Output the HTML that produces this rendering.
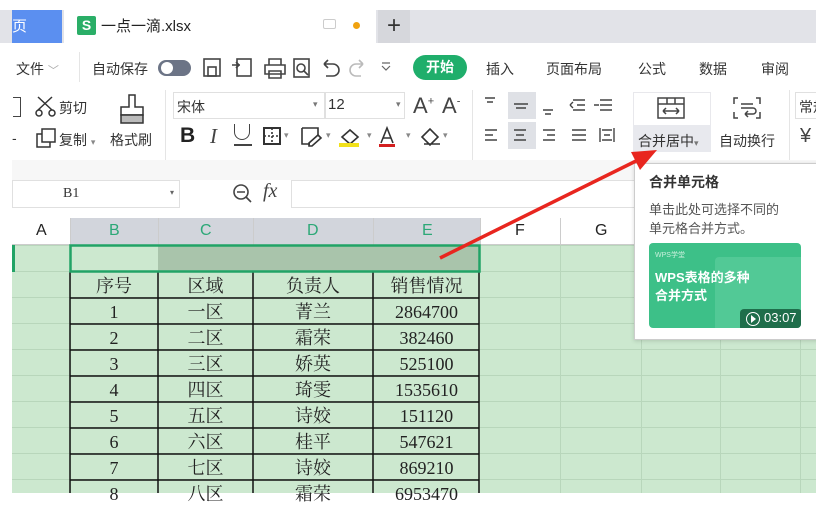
<!DOCTYPE html>
<html><head><meta charset="utf-8"><style>
*{margin:0;padding:0;box-sizing:border-box}
body{width:816px;height:493px;overflow:hidden;background:#fff;font-family:"Liberation Sans","Noto Sans CJK SC",sans-serif;position:relative;color:#333}
.a{position:absolute;white-space:nowrap}
.t{font-size:14px;color:#333}
.cell{position:absolute;font-family:"Liberation Serif","Noto Serif CJK SC",serif;font-size:18px;color:#222;text-align:center;line-height:26px}
</style></head><body>
<!-- tab bar -->
<div class="a" style="left:0;top:10px;width:816px;height:33px;background:#e2e3e8"></div>
<div class="a" style="left:12px;top:10px;width:50px;height:33px;background:#5b8ff0;color:#fff;font-size:15px;line-height:33px;padding-left:0">页</div>
<div class="a" style="left:64px;top:10px;width:312px;height:33px;background:#fff"></div>
<div class="a" style="left:77px;top:16px;width:19px;height:19px;background:#2aae67;border-radius:2px;color:#fff;font-size:14px;text-align:center;line-height:19px;font-weight:bold">S</div>
<div class="a" style="left:101px;top:15px;font-size:15px;color:#222">一点一滴.xlsx</div>
<div class="a" style="left:323px;top:19px;width:13px;height:10px;border:1.5px solid #ccc;border-radius:2px"></div>
<div class="a" style="left:353px;top:22px;width:7px;height:7px;background:#f0a20f;border-radius:50%"></div>
<div class="a" style="left:378px;top:10px;width:32px;height:33px;background:#d6d7dc;font-size:24px;line-height:31px;text-align:center;color:#333">+</div>
<!-- menu row -->
<div class="a t" style="left:16px;top:59px">文件 <span style="color:#aaa;font-size:11px">﹀</span></div>
<div class="a" style="left:79px;top:52px;width:1px;height:30px;background:#e5e5e5"></div>
<div class="a t" style="left:92px;top:59px">自动保存</div>
<div class="a" style="left:158px;top:60px;width:33px;height:16px;background:#6c7486;border-radius:8px"></div>
<div class="a" style="left:161px;top:62px;width:12px;height:12px;background:#fff;border-radius:50%"></div>
<svg class="a" style="left:200px;top:56px" width="200" height="24" fill="none" stroke="#444" stroke-width="1.6">
<rect x="4" y="3" width="16" height="17"/><rect x="8" y="11" width="8" height="9"/>
<rect x="37" y="3" width="14" height="17"/><path d="M32 9h8M36 6l3 3-3 3"/>
<path d="M65 9h20v9H65zM69 9V3h12v6M69 15h12v7H69z"/>
<rect x="94" y="3" width="15" height="18"/><circle cx="101" cy="12" r="4"/><path d="M104 15l4 4"/>
<path d="M124 8h9a6 6 0 010 12h-7M124 8l4-4M124 8l4 4"/>
<path d="M163 8h-7a6 6 0 000 12h5M163 8l-4-4M163 8l-4 4" stroke="#bbb"/>
<path d="M182 10l4 4 4-4M182 7h8" stroke="#666" stroke-width="1.2"/>
</svg>
<div class="a" style="left:413px;top:55px;width:54px;height:25px;background:#1fae6b;border-radius:13px;color:#fff;font-size:14px;font-weight:bold;text-align:center;line-height:25px">开始</div>
<div class="a t" style="left:486px;top:59px">插入</div>
<div class="a t" style="left:546px;top:59px">页面布局</div>
<div class="a t" style="left:638px;top:59px">公式</div>
<div class="a t" style="left:699px;top:59px">数据</div>
<div class="a t" style="left:761px;top:59px">审阅</div>
<!-- ribbon -->
<div class="a" style="left:13px;top:97px;width:8px;height:20px;border:1.5px solid #444;border-left:none"></div>
<svg class="a" style="left:35px;top:95px" width="22" height="22" fill="none" stroke="#333" stroke-width="1.5"><path d="M3 2l14 13M17 2L3 15"/><circle cx="4" cy="18" r="3"/><circle cx="17" cy="18" r="3"/></svg>
<div class="a t" style="left:59px;top:98px">剪切</div>
<svg class="a" style="left:35px;top:127px" width="22" height="22" fill="none" stroke="#333" stroke-width="1.5"><rect x="7" y="2" width="13" height="13"/><path d="M7 7H2v13h13v-5"/></svg>
<div class="a t" style="left:59px;top:130px">复制 <span style="font-size:9px;color:#888">▾</span></div>
<div class="a t" style="left:12px;top:130px">-</div>
<svg class="a" style="left:118px;top:93px" width="28" height="32" fill="none" stroke="#333" stroke-width="1.5"><path d="M11 2h6v12h8v8H3v-8h8z"/><rect x="3" y="22" width="22" height="8" fill="#bbb"/></svg>
<div class="a t" style="left:110px;top:130px">格式刷</div>
<div class="a" style="left:165px;top:90px;width:1px;height:70px;background:#e5e5e5"></div>
<div class="a" style="left:173px;top:92px;width:152px;height:27px;border:1px solid #e0e0e0"></div>
<div class="a t" style="left:177px;top:97px">宋体</div>
<div class="a" style="left:313px;top:99px;font-size:9px;color:#777">▾</div>
<div class="a" style="left:325px;top:92px;width:80px;height:27px;border:1px solid #e0e0e0"></div>
<div class="a" style="left:328px;top:96px;font-size:15px">12</div>
<div class="a" style="left:396px;top:99px;font-size:9px;color:#777">▾</div>
<div class="a" style="left:413px;top:93px;font-size:22px;color:#444">A<sup style="font-size:11px">+</sup></div>
<div class="a" style="left:442px;top:93px;font-size:22px;color:#444">A<sup style="font-size:11px">-</sup></div>
<div class="a" style="left:180px;top:124px;font-size:21px;font-weight:bold;color:#222">B</div>
<div class="a" style="left:210px;top:124px;font-size:21px;font-style:italic;font-family:'Liberation Serif',serif;color:#444">I</div>
<div class="a" style="left:234px;top:124px;width:16px;height:16px;border:1.5px solid #444;border-top:none;border-radius:0 0 8px 8px"></div>
<div class="a" style="left:234px;top:144px;width:18px;height:1.5px;background:#444"></div>
<svg class="a" style="left:262px;top:125px" width="200" height="24" fill="none" stroke="#333" stroke-width="1.6"><rect x="2" y="3" width="16" height="16" stroke-width="2"/><path d="M10 3v16M2 11h16" stroke-dasharray="2 2"/>
<path d="M40 3h16v7M40 3v16h8" /><path d="M47 18l9-8 3 3-9 8h-3z"/>
<path d="M80 12l8-7 8 7-8 7z"/><rect x="77" y="18" width="20" height="4" fill="#f2e11a" stroke="none"/>
<path d="M119 18l6-15 6 15M121 13h8"/><rect x="117" y="19" width="16" height="3" fill="#d31f1f" stroke="none"/>
<path d="M160 12l8-8 8 8-8 8zM162 19h16"/></svg>
<div class="a" style="left:284px;top:130px;font-size:9px;color:#888">▾</div>
<div class="a" style="left:326px;top:130px;font-size:9px;color:#888">▾</div>
<div class="a" style="left:367px;top:130px;font-size:9px;color:#888">▾</div>
<div class="a" style="left:406px;top:130px;font-size:9px;color:#888">▾</div>
<div class="a" style="left:443px;top:130px;font-size:9px;color:#888">▾</div>
<div class="a" style="left:472px;top:90px;width:1px;height:70px;background:#e5e5e5"></div>
<div class="a" style="left:508px;top:92px;width:28px;height:27px;background:#dfe1e6"></div>
<div class="a" style="left:508px;top:122px;width:28px;height:27px;background:#dfe1e6"></div>
<svg class="a" style="left:480px;top:92px" width="150" height="60" fill="none" stroke="#444" stroke-width="1.4">
<path d="M5 6h10M7 10h6M17 6h0"/><path d="M34 12h14M36 16h10"/><path d="M63 18h10M65 22h6"/>
<path d="M93 8h12M97 13h8M93 18h12M90 13l3-3M90 13l3 3"/><path d="M120 8h12M120 13h12M120 18h12M114 13h5"/>
<path d="M5 38h12M5 43h8M5 48h12"/><path d="M34 38h12M36 43h8M34 48h12"/><path d="M63 38h12M67 43h8M63 48h12"/>
<path d="M92 38h14M92 43h14M92 48h14"/><path d="M120 36v14M134 36v14M122 38h10M122 48h10M124 43h6"/></svg>
<div class="a" style="left:633px;top:92px;width:78px;height:60px;background:#fff;border:1px solid #e8e8ec"></div>
<div class="a" style="left:633px;top:125px;width:78px;height:27px;background:#e8e9ee"></div>
<svg class="a" style="left:656px;top:96px" width="30" height="26" fill="none" stroke="#444" stroke-width="1.5"><rect x="2" y="2" width="26" height="20"/><path d="M2 8h26M11 2v6M19 2v6M7 15h16M7 15l3-3M7 15l3 3M23 15l-3-3M23 15l-3 3"/></svg>
<div class="a t" style="left:638px;top:131px">合并居中<span style="font-size:9px;color:#777">▾</span></div>
<svg class="a" style="left:732px;top:96px" width="30" height="26" fill="none" stroke="#444" stroke-width="1.5"><path d="M6 2H2v6M24 2h4v6M2 16v6h4M28 16v6h-4M9 8h12M9 12h12a3 3 0 010 6h-8M13 18l3-3M13 18l3 3"/></svg>
<div class="a t" style="left:719px;top:131px">自动换行</div>
<div class="a" style="left:789px;top:90px;width:1px;height:70px;background:#e5e5e5"></div>
<div class="a" style="left:795px;top:92px;width:30px;height:27px;border:1px solid #e0e0e0;font-size:14px;padding:4px 0 0 3px">常规</div>
<div class="a" style="left:800px;top:125px;font-size:20px;color:#444">¥</div>
<!-- formula bar -->
<div class="a" style="left:12px;top:160px;width:804px;height:20px;background:#f7f7f7"></div>
<div class="a" style="left:12px;top:180px;width:168px;height:28px;border:1px solid #e0e0e0;background:#fff"></div>
<div class="a" style="left:63px;top:186px;font-family:'Liberation Serif',serif;font-size:14px">B1</div>
<div class="a" style="left:170px;top:188px;font-size:8px;color:#666">▾</div>
<svg class="a" style="left:231px;top:182px" width="24" height="24" fill="none" stroke="#444" stroke-width="1.6"><circle cx="10" cy="10" r="7"/><path d="M6 10h8M15 15l5 5"/></svg>
<div class="a" style="left:263px;top:180px;font-family:'Liberation Serif',serif;font-style:italic;font-size:20px;color:#444">fx</div>
<div class="a" style="left:291px;top:180px;width:530px;height:28px;border:1px solid #e0e0e0;background:#fff"></div>
<!-- grid -->
<div class="a" style="left:12px;top:218px;width:804px;height:27px;background:#fff;border-bottom:1px solid #ccc"></div>
<div class="a" style="left:70px;top:218px;width:410px;height:27px;background:#d2d5dc"></div>
<div class="a" style="left:12px;top:245px;width:804px;height:248px;background:#cce8cf;
background-image:linear-gradient(#b8d6bb 1px,transparent 1px);background-size:100% 26px"></div>
<div class="a" style="left:158px;top:245px;width:322px;height:27px;background:#a9c4ab"></div>
<svg class="a" style="left:12px;top:218px" width="804" height="275">
<g stroke="#b8d6bb" stroke-width="1"><line x1="58.5" y1="27" x2="58.5" y2="275"/><line x1="548.5" y1="27" x2="548.5" y2="275"/><line x1="629.5" y1="27" x2="629.5" y2="275"/><line x1="708.5" y1="27" x2="708.5" y2="275"/><line x1="788.5" y1="27" x2="788.5" y2="275"/></g>
<g stroke="#ccc"><line x1="58.5" y1="0" x2="58.5" y2="27"/><line x1="146.5" y1="0" x2="146.5" y2="27"/><line x1="241.5" y1="0" x2="241.5" y2="27"/><line x1="361.5" y1="0" x2="361.5" y2="27"/><line x1="468.5" y1="0" x2="468.5" y2="27"/><line x1="548.5" y1="0" x2="548.5" y2="27"/><line x1="629.5" y1="0" x2="629.5" y2="27"/></g>
<g stroke="#111" stroke-width="1.5" fill="none">
<line x1="58" y1="54" x2="58" y2="275"/><line x1="146" y1="54" x2="146" y2="275"/><line x1="241" y1="54" x2="241" y2="275"/><line x1="361" y1="54" x2="361" y2="275"/><line x1="467" y1="54" x2="467" y2="275"/>
<line x1="58" y1="80" x2="467" y2="80"/><line x1="58" y1="106" x2="467" y2="106"/><line x1="58" y1="132" x2="467" y2="132"/><line x1="58" y1="158" x2="467" y2="158"/><line x1="58" y1="184" x2="467" y2="184"/><line x1="58" y1="210" x2="467" y2="210"/><line x1="58" y1="236" x2="467" y2="236"/><line x1="58" y1="262" x2="467" y2="262"/></g>
<rect x="58.5" y="27.5" width="409" height="26" fill="none" stroke="#21a366" stroke-width="2.5"/>
<rect x="0" y="27" width="3" height="27" fill="#21a366"/>
</svg>
<div class="a" style="left:36px;top:222px;font-size:16px;color:#222">A</div>
<div class="a" style="left:109px;top:222px;font-size:16px;color:#2ca877">B</div>
<div class="a" style="left:200px;top:222px;font-size:16px;color:#2ca877">C</div>
<div class="a" style="left:307px;top:222px;font-size:16px;color:#2ca877">D</div>
<div class="a" style="left:422px;top:222px;font-size:16px;color:#2ca877">E</div>
<div class="a" style="left:515px;top:222px;font-size:16px;color:#222">F</div>
<div class="a" style="left:595px;top:222px;font-size:16px;color:#222">G</div>
<!-- table text -->
<div class="cell" style="left:70px;top:273px;width:88px">序号</div><div class="cell" style="left:158px;top:273px;width:95px">区域</div><div class="cell" style="left:253px;top:273px;width:120px">负责人</div><div class="cell" style="left:373px;top:273px;width:107px">销售情况</div>
<div class="cell" style="left:70px;top:299px;width:88px">1</div><div class="cell" style="left:158px;top:299px;width:95px">一区</div><div class="cell" style="left:253px;top:299px;width:120px">菁兰</div><div class="cell" style="left:373px;top:299px;width:107px">2864700</div>
<div class="cell" style="left:70px;top:325px;width:88px">2</div><div class="cell" style="left:158px;top:325px;width:95px">二区</div><div class="cell" style="left:253px;top:325px;width:120px">霜荣</div><div class="cell" style="left:373px;top:325px;width:107px">382460</div>
<div class="cell" style="left:70px;top:351px;width:88px">3</div><div class="cell" style="left:158px;top:351px;width:95px">三区</div><div class="cell" style="left:253px;top:351px;width:120px">娇英</div><div class="cell" style="left:373px;top:351px;width:107px">525100</div>
<div class="cell" style="left:70px;top:377px;width:88px">4</div><div class="cell" style="left:158px;top:377px;width:95px">四区</div><div class="cell" style="left:253px;top:377px;width:120px">琦雯</div><div class="cell" style="left:373px;top:377px;width:107px">1535610</div>
<div class="cell" style="left:70px;top:403px;width:88px">5</div><div class="cell" style="left:158px;top:403px;width:95px">五区</div><div class="cell" style="left:253px;top:403px;width:120px">诗姣</div><div class="cell" style="left:373px;top:403px;width:107px">151120</div>
<div class="cell" style="left:70px;top:429px;width:88px">6</div><div class="cell" style="left:158px;top:429px;width:95px">六区</div><div class="cell" style="left:253px;top:429px;width:120px">桂平</div><div class="cell" style="left:373px;top:429px;width:107px">547621</div>
<div class="cell" style="left:70px;top:455px;width:88px">7</div><div class="cell" style="left:158px;top:455px;width:95px">七区</div><div class="cell" style="left:253px;top:455px;width:120px">诗姣</div><div class="cell" style="left:373px;top:455px;width:107px">869210</div>
<div class="cell" style="left:70px;top:481px;width:88px">8</div><div class="cell" style="left:158px;top:481px;width:95px">八区</div><div class="cell" style="left:253px;top:481px;width:120px">霜荣</div><div class="cell" style="left:373px;top:481px;width:107px">6953470</div>
<!-- tooltip -->
<div class="a" style="left:634px;top:163px;width:190px;height:177px;background:#fff;border:1px solid #ccc;box-shadow:0 1px 4px rgba(0,0,0,.15)"></div>
<div class="a" style="left:649px;top:172px;font-size:14px;font-weight:bold;color:#333">合并单元格</div>
<div class="a" style="left:649px;top:200px;font-size:13px;color:#555;line-height:19px">单击此处可选择不同的<br>单元格合并方式。</div>
<div class="a" style="left:649px;top:243px;width:152px;height:85px;background:#3dc088;border-radius:4px;overflow:hidden">
<div class="a" style="left:66px;top:14px;width:90px;height:75px;background:#52c996;border-radius:4px"></div>
<div class="a" style="left:6px;top:7px;font-size:7px;color:#c9f0dc">WPS学堂</div>
<div class="a" style="left:6px;top:26px;font-size:13px;font-weight:bold;color:#fff;line-height:18px">WPS表格的多种<br>合并方式</div>
<div class="a" style="left:91px;top:66px;width:62px;height:22px;background:#1f6e4b;border-radius:4px"></div>
<div class="a" style="left:97px;top:69px;width:14px;height:14px;border:1.5px solid #fff;border-radius:50%"></div>
<div class="a" style="left:102px;top:72px;width:0;height:0;border-left:5px solid #fff;border-top:4px solid transparent;border-bottom:4px solid transparent"></div>
<div class="a" style="left:115px;top:67px;font-size:13px;color:#fff">03:07</div>
</div>
<!-- arrow -->
<svg class="a" style="left:0;top:0" width="816" height="493"><line x1="440" y1="258" x2="638" y2="160" stroke="#e8261f" stroke-width="3.5"/><polygon points="657,150 631,152 640,170" fill="#e8261f"/></svg>
</body></html>
